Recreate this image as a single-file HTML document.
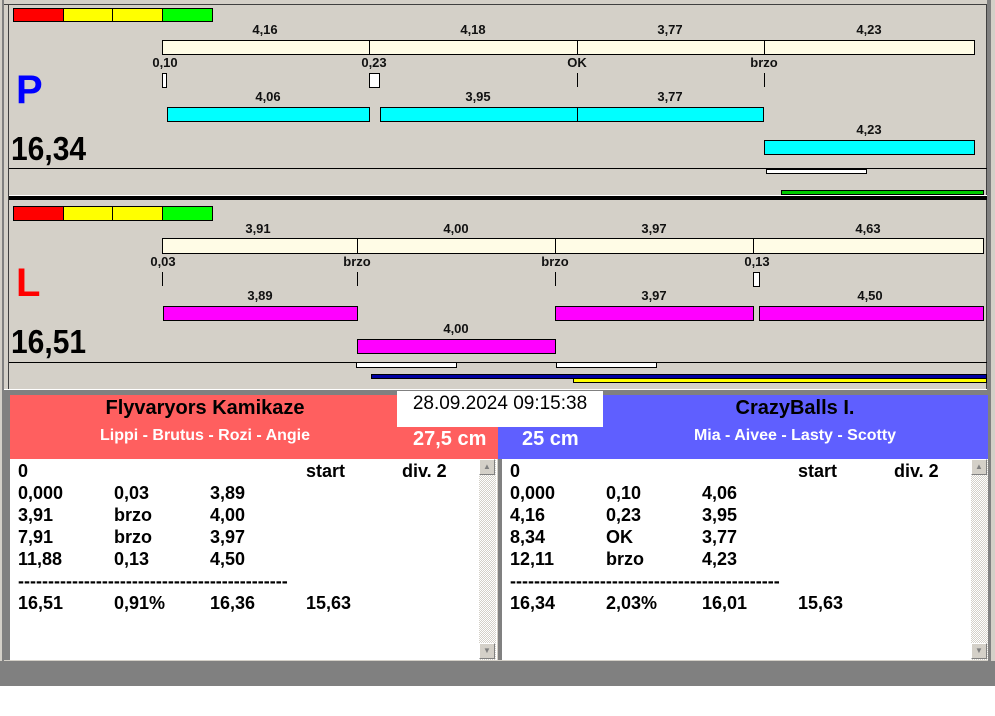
<!DOCTYPE html>
<html><head><meta charset="utf-8"><style>
*{margin:0;padding:0;box-sizing:border-box}
body{width:995px;height:716px;background:#fff;position:relative;overflow:hidden;font-family:"Liberation Sans",Arial,sans-serif;font-weight:bold}
div{position:absolute}
.b{border:1px solid #000}
.t{font-size:13px;color:#111;transform:translateX(-50%);white-space:nowrap;line-height:14px}
.v{width:1px;background:#000}
.row{font-size:18px;color:#000;line-height:22px;white-space:nowrap}
.sb{background:repeating-conic-gradient(#d4d0c8 0 25%,#fff 0 50%) 0 0/2px 2px}
.btn{width:16px;height:16px;background:#d4d0c8;border:1px solid;border-color:#fff #808080 #808080 #fff;font-size:8px;color:#808080;text-align:center;line-height:14px}
.big{font-size:30px;color:#000;line-height:36px;transform:scaleY(1.1);transform-origin:0 100%}
</style></head><body>
<div style="left:0;top:0;width:995px;height:686px;background:#d4d0c8"></div>
<div style="left:2px;top:0;width:2px;height:686px;background:#808080"></div>
<div style="left:987px;top:0;width:4px;height:686px;background:#808080"></div>
<div style="left:4px;top:4px;width:983px;height:1px;background:#404040"></div>
<div style="left:8px;top:4px;width:1px;height:388px;background:#404040"></div>
<div style="left:986px;top:4px;width:1px;height:388px;background:#404040"></div>

<!-- TOP PANEL -->
<div class="b" style="left:13px;top:8px;width:51px;height:14px;background:#f00"></div>
<div class="b" style="left:63px;top:8px;width:50px;height:14px;background:#ff0"></div>
<div class="b" style="left:112px;top:8px;width:51px;height:14px;background:#ff0"></div>
<div class="b" style="left:162px;top:8px;width:51px;height:14px;background:#0f0"></div>

<div class="t" style="left:265px;top:23px">4,16</div>
<div class="t" style="left:473px;top:23px">4,18</div>
<div class="t" style="left:670px;top:23px">3,77</div>
<div class="t" style="left:869px;top:23px">4,23</div>
<div class="b" style="left:162px;top:40px;width:813px;height:15px;background:#fffce6"></div>
<div class="v" style="left:369px;top:40px;height:15px"></div>
<div class="v" style="left:577px;top:40px;height:15px"></div>
<div class="v" style="left:764px;top:40px;height:15px"></div>
<div class="t" style="left:165px;top:56px">0,10</div>
<div class="t" style="left:374px;top:56px">0,23</div>
<div class="t" style="left:577px;top:56px">OK</div>
<div class="t" style="left:764px;top:56px">brzo</div>
<div class="b" style="left:162px;top:73px;width:5px;height:15px;background:#fff"></div>
<div class="b" style="left:369px;top:73px;width:11px;height:15px;background:#fff"></div>
<div class="v" style="left:577px;top:73px;height:14px"></div>
<div class="v" style="left:764px;top:73px;height:14px"></div>

<div style="left:16px;top:66px;font-size:40px;color:#0000ff;line-height:48px">P</div>

<div class="t" style="left:268px;top:90px">4,06</div>
<div class="t" style="left:478px;top:90px">3,95</div>
<div class="t" style="left:670px;top:90px">3,77</div>
<div class="b" style="left:167px;top:107px;width:203px;height:15px;background:#0ff"></div>
<div class="b" style="left:380px;top:107px;width:198px;height:15px;background:#0ff"></div>
<div class="b" style="left:577px;top:107px;width:187px;height:15px;background:#0ff"></div>
<div class="t" style="left:869px;top:123px">4,23</div>
<div class="b" style="left:764px;top:140px;width:211px;height:15px;background:#0ff"></div>

<div class="big" style="left:11px;top:134px">16,34</div>

<div style="left:9px;top:168px;width:978px;height:1px;background:#000"></div>
<div class="b" style="left:766px;top:169px;width:101px;height:5px;background:#fff"></div>
<div class="b" style="left:781px;top:190px;width:203px;height:5px;background:#0c0"></div>
<div style="left:9px;top:195px;width:978px;height:1px;background:#fff"></div>
<div style="left:9px;top:196px;width:978px;height:4px;background:#000"></div>

<!-- BOTTOM PANEL -->
<div class="b" style="left:13px;top:206px;width:51px;height:15px;background:#f00"></div>
<div class="b" style="left:63px;top:206px;width:50px;height:15px;background:#ff0"></div>
<div class="b" style="left:112px;top:206px;width:51px;height:15px;background:#ff0"></div>
<div class="b" style="left:162px;top:206px;width:51px;height:15px;background:#0f0"></div>

<div class="t" style="left:258px;top:222px">3,91</div>
<div class="t" style="left:456px;top:222px">4,00</div>
<div class="t" style="left:654px;top:222px">3,97</div>
<div class="t" style="left:868px;top:222px">4,63</div>
<div class="b" style="left:162px;top:238px;width:822px;height:16px;background:#fffce6"></div>
<div class="v" style="left:357px;top:238px;height:16px"></div>
<div class="v" style="left:555px;top:238px;height:16px"></div>
<div class="v" style="left:753px;top:238px;height:16px"></div>
<div class="t" style="left:163px;top:255px">0,03</div>
<div class="t" style="left:357px;top:255px">brzo</div>
<div class="t" style="left:555px;top:255px">brzo</div>
<div class="t" style="left:757px;top:255px">0,13</div>
<div class="v" style="left:162px;top:272px;height:14px"></div>
<div class="v" style="left:357px;top:272px;height:14px"></div>
<div class="v" style="left:555px;top:272px;height:14px"></div>
<div class="b" style="left:753px;top:272px;width:7px;height:15px;background:#fff"></div>

<div style="left:16px;top:259px;font-size:40px;color:#f00;line-height:48px">L</div>

<div class="t" style="left:260px;top:289px">3,89</div>
<div class="t" style="left:654px;top:289px">3,97</div>
<div class="t" style="left:870px;top:289px">4,50</div>
<div class="b" style="left:163px;top:306px;width:195px;height:15px;background:#f0f"></div>
<div class="b" style="left:555px;top:306px;width:199px;height:15px;background:#f0f"></div>
<div class="b" style="left:759px;top:306px;width:225px;height:15px;background:#f0f"></div>
<div class="t" style="left:456px;top:322px">4,00</div>
<div class="b" style="left:357px;top:339px;width:199px;height:15px;background:#f0f"></div>

<div class="big" style="left:11px;top:327px">16,51</div>

<div style="left:9px;top:362px;width:978px;height:1px;background:#000"></div>
<div class="b" style="left:356px;top:362px;width:101px;height:6px;background:#fff"></div>
<div class="b" style="left:556px;top:362px;width:101px;height:6px;background:#fff"></div>
<div style="left:371px;top:374px;width:616px;height:5px;background:#0000a0;border:1px solid #000"></div>
<div style="left:573px;top:378px;width:414px;height:5px;background:#ff0;border:1px solid #000"></div>
<div style="left:4px;top:389px;width:983px;height:1px;background:#fff"></div>
<div style="left:4px;top:390px;width:983px;height:5px;background:#808080"></div>
<div style="left:4px;top:395px;width:6px;height:265px;background:#808080"></div>

<!-- TEAM HEADERS -->
<div style="left:10px;top:395px;width:488px;height:64px;background:#ff5f5f"></div>
<div style="left:498px;top:395px;width:490px;height:64px;background:#5f5fff"></div>
<div style="left:5px;top:396px;width:400px;text-align:center;font-size:20px;line-height:24px;color:#000">Flyvaryors Kamikaze</div>
<div style="left:5px;top:427px;width:400px;text-align:center;font-size:16px;line-height:18px;color:#fff">Lippi - Brutus - Rozi - Angie</div>
<div style="left:413px;top:427px;font-size:20px;line-height:24px;color:#fff">27,5 cm</div>
<div style="left:522px;top:427px;font-size:20px;line-height:24px;color:#fff">25 cm</div>
<div style="left:595px;top:396px;width:400px;text-align:center;font-size:20px;line-height:24px;color:#000">CrazyBalls I.</div>
<div style="left:595px;top:427px;width:400px;text-align:center;font-size:16px;line-height:18px;color:#fff">Mia - Aivee - Lasty - Scotty</div>
<div style="left:397px;top:391px;width:206px;height:36px;background:#fff;font-size:19px;font-weight:normal;color:#000;line-height:26px;text-align:center">28.09.2024 09:15:38</div>

<!-- LISTS -->
<div style="left:10px;top:459px;width:488px;height:202px;background:#fff;border-right:1px solid #d4d0c8"></div>
<div class="sb" style="left:479px;top:459px;width:17px;height:201px"></div>
<div class="btn" style="left:479px;top:459px">▲</div>
<div class="btn" style="left:479px;top:643px">▼</div>
<div style="left:498px;top:459px;width:4px;height:202px;background:#808080"></div>
<div style="left:502px;top:459px;width:486px;height:202px;background:#fff"></div>
<div class="sb" style="left:971px;top:459px;width:17px;height:201px"></div>
<div class="btn" style="left:971px;top:459px">▲</div>
<div class="btn" style="left:971px;top:643px">▼</div>
<div style="left:10px;top:660px;width:978px;height:1px;background:#d4d0c8"></div>
<div style="left:0;top:661px;width:995px;height:25px;background:#808080"></div>

<div class="row" style="left:18px;top:460px">0</div>
<div class="row" style="left:306px;top:460px">start</div>
<div class="row" style="left:402px;top:460px">div. 2</div>
<div class="row" style="left:18px;top:482px">0,000</div><div class="row" style="left:114px;top:482px">0,03</div><div class="row" style="left:210px;top:482px">3,89</div>
<div class="row" style="left:18px;top:504px">3,91</div><div class="row" style="left:114px;top:504px">brzo</div><div class="row" style="left:210px;top:504px">4,00</div>
<div class="row" style="left:18px;top:526px">7,91</div><div class="row" style="left:114px;top:526px">brzo</div><div class="row" style="left:210px;top:526px">3,97</div>
<div class="row" style="left:18px;top:548px">11,88</div><div class="row" style="left:114px;top:548px">0,13</div><div class="row" style="left:210px;top:548px">4,50</div>
<div class="row" style="left:18px;top:570px">---------------------------------------------</div>
<div class="row" style="left:18px;top:592px">16,51</div><div class="row" style="left:114px;top:592px">0,91%</div><div class="row" style="left:210px;top:592px">16,36</div><div class="row" style="left:306px;top:592px">15,63</div>

<div class="row" style="left:510px;top:460px">0</div>
<div class="row" style="left:798px;top:460px">start</div>
<div class="row" style="left:894px;top:460px">div. 2</div>
<div class="row" style="left:510px;top:482px">0,000</div><div class="row" style="left:606px;top:482px">0,10</div><div class="row" style="left:702px;top:482px">4,06</div>
<div class="row" style="left:510px;top:504px">4,16</div><div class="row" style="left:606px;top:504px">0,23</div><div class="row" style="left:702px;top:504px">3,95</div>
<div class="row" style="left:510px;top:526px">8,34</div><div class="row" style="left:606px;top:526px">OK</div><div class="row" style="left:702px;top:526px">3,77</div>
<div class="row" style="left:510px;top:548px">12,11</div><div class="row" style="left:606px;top:548px">brzo</div><div class="row" style="left:702px;top:548px">4,23</div>
<div class="row" style="left:510px;top:570px">---------------------------------------------</div>
<div class="row" style="left:510px;top:592px">16,34</div><div class="row" style="left:606px;top:592px">2,03%</div><div class="row" style="left:702px;top:592px">16,01</div><div class="row" style="left:798px;top:592px">15,63</div>
</body></html>
